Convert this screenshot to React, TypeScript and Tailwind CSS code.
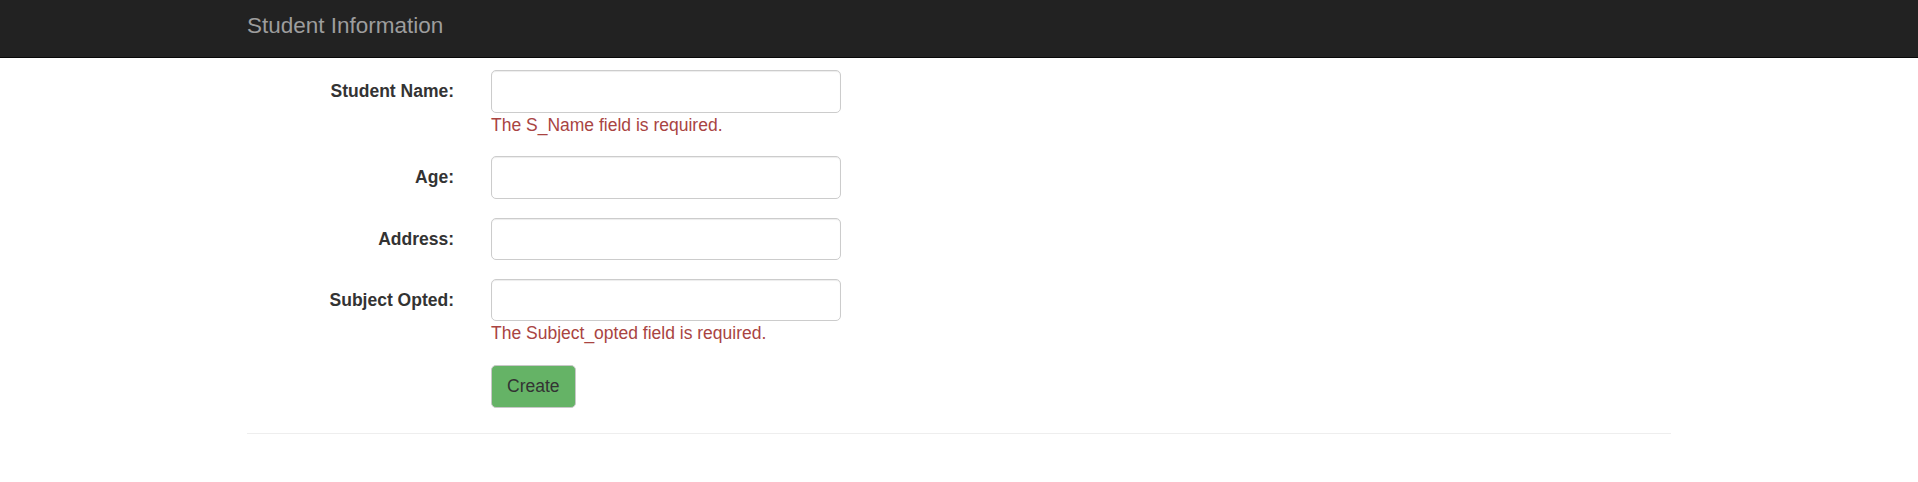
import React from "react"

const fields = [
  { label: "Student Name:", error: "The S_Name field is required." },
  { label: "Age:" },
  { label: "Address:" },
  { label: "Subject Opted:", error: "The Subject_opted field is required." },
]

function Field({ label, error }: { label: string; error?: string }) {
  return (
    <div className="flex items-start mb-[18.75px]">
      <label className="w-[207px] shrink-0 text-right font-bold text-[#333] pt-[9px] leading-[25px]">{label}</label>
      <div className="ml-[37px]">
        <input
          type="text"
          className="block w-[350px] h-[42.5px] px-[15px] border border-[#ccc] rounded-[5px] bg-white shadow-[inset_0_1px_1px_rgba(0,0,0,0.075)] outline-none"
        />
        {error && <span className="block text-[#a94442] leading-[25px]">{error}</span>}
      </div>
    </div>
  )
}

export default function App() {
  return (
    <div className="min-h-screen bg-white text-[17.5px] text-[#333]" style={{ fontFamily: '"Liberation Sans", Arial, sans-serif' }}>
      {/* Navbar */}
      <div className="h-[58px] bg-[#222] border-b border-[#080808]">
        <div className="w-[1424px] mx-auto pt-[13px]">
          <span className="block text-[22.5px] text-[#9d9d9d] leading-[25px]">Student Information</span>
        </div>
      </div>

      {/* Body */}
      <div className="w-[1424px] mx-auto pt-[12px]">
        {fields.map(f => (
          <Field key={f.label} label={f.label} error={f.error} />
        ))}
        <div className="flex">
          <div className="w-[207px] shrink-0" />
          <button className="ml-[37px] h-[42.5px] px-[15px] bg-[#65b366] border border-[#c8c8c8] rounded-[5px] text-[#333]">
            Create
          </button>
        </div>
        <hr className="mt-[25px] border-t border-[#eee]" />
      </div>
    </div>
  )
}
